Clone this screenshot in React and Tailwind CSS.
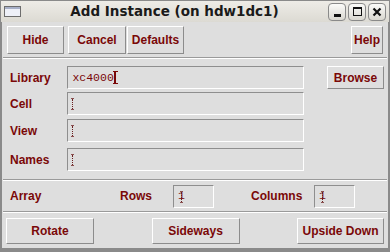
import React from 'react'

const txt = 'text-[#7a0808] font-bold text-[12px] leading-none'
const raised =
  'flex items-center justify-center border border-t-white border-l-white border-r-[#8c8c8c] border-b-[#8c8c8c] bg-[#dedede]'
const sunken =
  'relative border border-t-[#8e8e8e] border-l-[#8e8e8e] border-r-white border-b-white bg-[#dedede]'

const Btn = ({ label, className = '' }) => (
  <div className={`${raised} ${txt} ${className}`}>{label}</div>
)

// dotted tk-style insertion cursor shown in idle fields
const DotCursor = ({ left = 3 }) => (
  <div className="absolute top-[5px] flex flex-col items-center" style={{ left }}>
    <div className="h-px w-[3px] bg-[#8a5050]" />
    <div className="h-[10px] border-l border-dotted border-[#6a2020]" />
    <div className="h-px w-[3px] bg-[#8a5050]" />
  </div>
)

const Field = ({ value, active, className = '' }) => (
  <div className={`${sunken} h-[23px] ${className}`}>
    {active ? (
      <div className="flex h-full items-center pl-[4px]">
        <span className="font-['Liberation_Mono',monospace] text-[11.5px] text-[#7a0808]">{value}</span>
        <div className="ml-[-1px] flex h-[13px] flex-col items-center">
          <div className="h-px w-[5px] bg-[#7a0808]" />
          <div className="w-[2px] flex-1 bg-[#7a0808]" />
          <div className="h-px w-[5px] bg-[#7a0808]" />
        </div>
      </div>
    ) : (
      <>
        {value && (
          <div className="flex h-full items-center pl-[4px]">
            <span className="font-['Liberation_Mono',monospace] text-[11.5px] text-[#7a0808]">{value}</span>
          </div>
        )}
        <DotCursor left={value ? 6 : 3} />
      </>
    )}
  </div>
)

const Sep = () => <div className="mx-[1px] h-[2px] border-t border-t-[#9a9a9a] border-b border-b-white" />

const TitleBtn = ({ children }) => (
  <div className="flex h-[18px] w-[18px] items-center justify-center rounded-[4px] border border-[#8a8a8a] bg-gradient-to-b from-[#fbfbf9] to-[#d9d7d0] text-[#111]">
    {children}
  </div>
)

const rows = [
  ['Library', 'xc4000', 'mt-0'],
  ['Cell', '', 'mt-[3px]'],
  ['View', '', 'mt-[4px]'],
  ['Names', '', 'mt-[6px]'],
]

export default function App() {
  return (
    <div className="flex h-[252px] w-[390px] flex-col bg-[#dedede] font-['Liberation_Sans',Arial,sans-serif]">
      {/* title bar */}
      <div className="relative flex h-[22px] items-center border-x border-t border-[#8a8a8a] bg-gradient-to-b from-[#eeece7] to-[#dcdad3]">
        <div className="ml-[3px] flex h-[11px] w-[17px] flex-col border border-[#6d6d6d] bg-[#eef0f8]">
          <div className="h-[2px] bg-[#a8b0c8]" />
        </div>
        <div className="flex-1 text-center font-['DejaVu_Sans',sans-serif] text-[13.5px] font-bold text-[#1a1a1a]">
          Add Instance (on hdw1dc1)
        </div>
        <div className="mr-[3px] flex gap-[2px]">
          <TitleBtn>
            <div className="mt-[8px] h-[3px] w-[7px] bg-[#111]" />
          </TitleBtn>
          <TitleBtn>
            <div className="h-[9px] w-[9px] border border-t-2 border-[#111]" />
          </TitleBtn>
          <TitleBtn>
            <svg width="10" height="10" viewBox="0 0 10 10">
              <path d="M1.5 1.5 L8.5 8.5 M8.5 1.5 L1.5 8.5" stroke="#111" strokeWidth="2.2" />
            </svg>
          </TitleBtn>
        </div>
      </div>

      {/* window body */}
      <div className="flex flex-1 flex-col border-x-2 border-b-[4px] border-x-[#8a8a8a] border-b-[#8a8a8a]">
        {/* toolbar */}
        <div className="flex h-[35px] items-center px-[5px] pt-[1px]">
          <Btn label="Hide" className="h-[28px] w-[57px]" />
          <Btn label="Cancel" className="ml-[4px] h-[28px] w-[58px]" />
          <Btn label="Defaults" className="ml-[1px] h-[28px] w-[57px]" />
          <div className="flex-1" />
          <Btn label="Help" className="h-[28px] w-[32px]" />
        </div>
        <Sep />

        {/* form */}
        <div className="flex h-[120px] pt-[7px]">
          <div className="flex w-[302px] flex-col pl-[8px]">
            {rows.map(([l, v, m]) => (
              <div key={l} className={`flex h-[23px] items-center ${m}`}>
                <div className={`${txt} w-[58px]`}>{l}</div>
                <Field value={v} active={!!v} className="w-[239px]" />
              </div>
            ))}
          </div>
          <Btn label="Browse" className="ml-[23px] h-[23px] w-[57px]" />
        </div>
        <Sep />

        {/* array row */}
        <div className="flex h-[30px] items-center pl-[8px]">
          <div className={`${txt} w-[110px]`}>Array</div>
          <div className={`${txt} w-[53px]`}>Rows</div>
          <Field value="1" className="w-[41px]" />
          <div className={`${txt} ml-[37px] w-[63px]`}>Columns</div>
          <Field value="1" className="w-[41px]" />
        </div>
        <Sep />

        {/* bottom buttons */}
        <div className="flex flex-1 items-center justify-between px-[4px]">
          <Btn label="Rotate" className="h-[26px] w-[88px]" />
          <Btn label="Sideways" className="h-[26px] w-[88px]" />
          <Btn label="Upside Down" className="h-[26px] w-[87px]" />
        </div>
      </div>
    </div>
  )
}
